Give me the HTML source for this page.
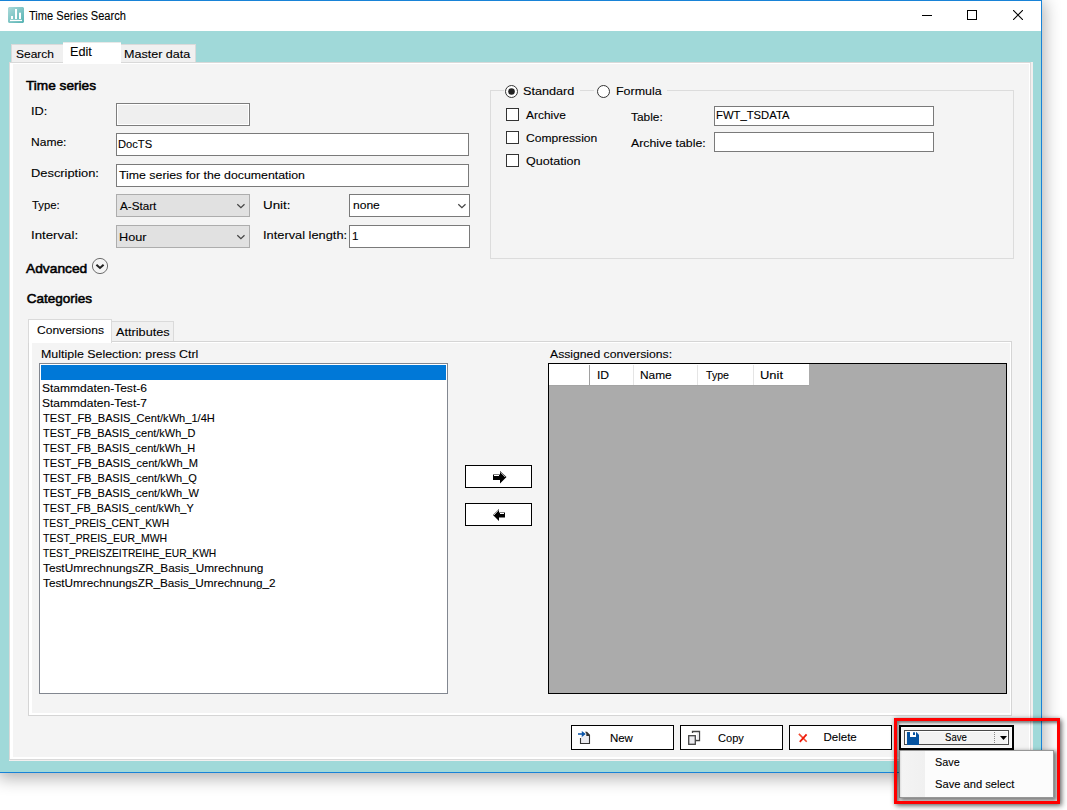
<!DOCTYPE html>
<html><head><meta charset="utf-8">
<style>
*{box-sizing:border-box;margin:0;padding:0}
html,body{width:1067px;height:810px;overflow:hidden;background:#fff;font-family:"Liberation Sans",sans-serif;font-size:12px;color:#000}
.a{position:absolute}
.t{position:absolute;white-space:nowrap;line-height:14px;transform-origin:0 0;z-index:8;-webkit-text-stroke:0.1px #000}
#win{position:absolute;left:0;top:0;width:1042px;height:773px;background:#a0d9d9;box-shadow:0 3px 16px 2px rgba(0,0,0,.32)}
.inp{position:absolute;background:#fff;border:1px solid #7a7a7a}
.combo{position:absolute;background:#e1e1e1;border:1px solid #adadad}
.cb{position:absolute;width:13px;height:13px;border:1px solid #333;background:#fff}
.btn{position:absolute;background:#fff;border:1px solid #000}
</style></head><body>
<div id="win">
 <div class="a" style="left:0;top:0;width:1042px;height:1px;background:#1883d7;z-index:5"></div>
 <div class="a" style="left:1041px;top:0;width:1px;height:773px;background:#1883d7;z-index:5"></div>
 <div class="a" style="left:0;top:772px;width:1042px;height:1px;background:#1883d7;z-index:5"></div>
 <div class="a" style="left:0;top:0;width:1041px;height:31px;background:#fff"></div>
 <svg class="a" style="left:8px;top:7px" width="16" height="16" viewBox="0 0 16 16">
  <defs><linearGradient id="g1" x1="0" y1="0" x2="1" y2="1"><stop offset="0" stop-color="#acdada"/><stop offset="1" stop-color="#55b2b2"/></linearGradient></defs>
  <path d="M1 0H15L16 1V15L15 16H1L0 15V1Z" fill="url(#g1)"/>
  <rect x="2" y="12.8" width="12" height="1.3" fill="#fff"/>
  <rect x="3" y="9" width="2" height="3" fill="#fff"/>
  <rect x="7" y="2" width="2" height="10" fill="#fff"/>
  <rect x="11" y="5.7" width="2" height="6.3" fill="#fff"/>
 </svg>
 <div class="a" style="left:922px;top:15px;width:10px;height:1px;background:#000"></div>
 <div class="a" style="left:967px;top:10px;width:10px;height:10px;border:1px solid #000"></div>
 <svg class="a" style="left:1013px;top:10px" width="10" height="10" viewBox="0 0 10 10"><path d="M0 0L10 10M10 0L0 10" stroke="#000" stroke-width="1.1"/></svg>

 <!-- outer tabs -->
 <div class="a" style="left:11px;top:44px;width:53px;height:19px;background:#f0f0f0;border:1px solid #dadada;border-bottom:none"></div>
 <div class="a" style="left:120px;top:44px;width:76px;height:19px;background:#f0f0f0;border:1px solid #dadada;border-bottom:none"></div>
 <div class="a" style="left:9px;top:62px;width:1024px;height:699px;background:#f2efef"></div>
 <div class="a" style="left:9px;top:62px;width:1022px;height:698px;background:#fff;border:1px solid #d9d9d9"></div>
 <div class="a" style="left:13px;top:64px;width:1016px;height:693px;background:#f4f4f4"></div>
 <div class="a" style="left:63px;top:42px;width:58px;height:22px;background:#fff;border-top:1px solid #e8e8e8"></div>

 <!-- Time series form -->
 <div class="inp" style="left:116px;top:103px;width:134px;height:23px;background:#efefef;border-color:#7d7d7d;box-shadow:inset 0 0 0 1px #fff"></div>
 <div class="inp" style="left:116px;top:133px;width:353px;height:23px"></div>
 <div class="inp" style="left:116px;top:164px;width:353px;height:23px"></div>
 <div class="combo" style="left:116px;top:194px;width:134px;height:23px"></div>
 <svg class="a" style="left:236px;top:203px" width="10" height="6" viewBox="0 0 10 6"><path d="M1.3 1.2L4.9 4.6L8.5 1.2" fill="none" stroke="#444" stroke-width="1.25"/></svg>
 <div class="inp" style="left:349px;top:194px;width:121px;height:23px"></div>
 <svg class="a" style="left:457px;top:203px" width="10" height="6" viewBox="0 0 10 6"><path d="M1.3 1.2L4.9 4.6L8.5 1.2" fill="none" stroke="#444" stroke-width="1.25"/></svg>
 <div class="combo" style="left:116px;top:225px;width:134px;height:23px"></div>
 <svg class="a" style="left:236px;top:234px" width="10" height="6" viewBox="0 0 10 6"><path d="M1.3 1.2L4.9 4.6L8.5 1.2" fill="none" stroke="#444" stroke-width="1.25"/></svg>
 <div class="inp" style="left:349px;top:225px;width:121px;height:23px"></div>
 <svg class="a" style="left:91px;top:257px" width="18" height="18" viewBox="0 0 18 18"><circle cx="9" cy="9" r="7.6" fill="none" stroke="#6e6e6e" stroke-width="1"/><path d="M5.4 7.7L9 11L12.6 7.7" fill="none" stroke="#222" stroke-width="2"/></svg>

 <!-- group box right -->
 <div class="a" style="left:490px;top:90px;width:524px;height:169px;border:1px solid #dcdcdc"></div>
 <div class="a" style="left:504px;top:84px;width:76px;height:14px;background:#f4f4f4"></div>
 <div class="a" style="left:594px;top:84px;width:73px;height:14px;background:#f4f4f4"></div>
 <svg class="a" style="left:505px;top:85px" width="13" height="13" viewBox="0 0 13 13"><circle cx="6.5" cy="6.5" r="6" fill="#fff" stroke="#333" stroke-width="1"/><circle cx="6.5" cy="6.5" r="3.3" fill="#222"/></svg>
 <svg class="a" style="left:597px;top:85px" width="13" height="13" viewBox="0 0 13 13"><circle cx="6.5" cy="6.5" r="6" fill="#fff" stroke="#333" stroke-width="1"/></svg>
 <div class="cb" style="left:506px;top:108px"></div>
 <div class="cb" style="left:506px;top:131px"></div>
 <div class="cb" style="left:506px;top:154px"></div>
 <div class="inp" style="left:714px;top:106px;width:220px;height:20px"></div>
 <div class="inp" style="left:714px;top:132px;width:220px;height:20px"></div>

 <!-- Categories -->
 <div class="a" style="left:111px;top:321px;width:63px;height:21px;background:#f0f0f0;border:1px solid #dadada;border-bottom:none"></div>
 <div class="a" style="left:28px;top:341px;width:984px;height:375px;background:#fff;border:1px solid #d5d5d5"></div>
 <div class="a" style="left:32px;top:343px;width:978px;height:370px;background:#f4f4f4"></div>
 <div class="a" style="left:28px;top:319px;width:84px;height:24px;background:#fff;border:1px solid #dadada;border-bottom:none"></div>

 <div class="a" style="left:39px;top:363px;width:409px;height:331px;background:#fff;border:1px solid #828790"></div>
 <div class="a" style="left:41px;top:365px;width:405px;height:15px;background:#0078d7"></div>

 <div class="btn" style="left:465px;top:465px;width:67px;height:23px"></div>
 <div class="btn" style="left:465px;top:503px;width:67px;height:23px"></div>
 <svg class="a" style="left:493px;top:471px" width="14" height="13" viewBox="0 0 14 13"><path d="M0 3.5H7V0L13.5 6L7 12.5V9H0Z" fill="#000"/><path d="M1 4.5H6" stroke="#fff" stroke-width="1"/><path d="M7.6 1.3L12.2 6" stroke="#fff" stroke-width="0.8"/></svg>
 <svg class="a" style="left:493px;top:509px" width="12" height="12" viewBox="0 0 12 12"><path d="M12 3.5H6V0L0 6L6 12V8.5H12Z" fill="#000"/><path d="M7 4.5H11" stroke="#fff" stroke-width="1"/><path d="M5.4 1.3L1 6" stroke="#fff" stroke-width="0.8"/></svg>

 <div class="a" style="left:548px;top:363px;width:459px;height:331px;background:#ababab;border:1px solid #000"></div>
 <div class="a" style="left:549px;top:364px;width:260px;height:21px;background:#fff"></div>
 <div class="a" style="left:589px;top:365px;width:1px;height:20px;background:#a0a0a0"></div>
 <div class="a" style="left:633px;top:365px;width:1px;height:20px;background:#e5e5e5"></div>
 <div class="a" style="left:697px;top:365px;width:1px;height:20px;background:#e5e5e5"></div>
 <div class="a" style="left:753px;top:365px;width:1px;height:20px;background:#e5e5e5"></div>
 <div class="a" style="left:549px;top:385px;width:260px;height:1px;background:#a4a4a4"></div>

 <!-- bottom buttons -->
 <div class="btn" style="left:571px;top:725px;width:103px;height:25px"></div>
 <svg class="a" style="left:577px;top:730px" width="15" height="15" viewBox="0 0 15 15"><rect x="4" y="5.5" width="8" height="7.5" fill="#ececf0"/><path d="M3.5 8V13.5H12.5V5" fill="none" stroke="#333" stroke-width="1.1"/><path d="M8 1.8H10L13 4.8V6H9.3V3.5Z" fill="#333"/><path d="M1 3.2H4.8V1L8.8 4L4.8 7V4.8H1Z" fill="#0a54a8"/></svg>
 <div class="btn" style="left:680px;top:725px;width:103px;height:25px"></div>
 <svg class="a" style="left:687px;top:730px" width="15" height="16" viewBox="0 0 15 16"><path d="M5.5 3V1.5H12.5V10.5H9" fill="none" stroke="#444" stroke-width="1.3"/><rect x="10" y="3" width="1.8" height="6.5" fill="#ececf0"/><rect x="1.7" y="5.7" width="6.6" height="8.6" fill="#ececf0" stroke="#444" stroke-width="1.3"/></svg>
 <div class="btn" style="left:789px;top:725px;width:103px;height:25px"></div>
 <svg class="a" style="left:798px;top:733px" width="10" height="10" viewBox="0 0 10 10"><path d="M0.9 0.9L8.7 8.7" stroke="#f04a30" stroke-width="1.6"/><path d="M8.6 1.3L1.8 8.8" stroke="#f01808" stroke-width="1.8"/></svg>

 <!-- save split button -->
 <div class="a" style="left:899px;top:725px;width:115px;height:25px;border:2px solid #000;background:#f5f5f5"></div>
 <div class="a" style="left:901px;top:727px;width:111px;height:21px;border:1px solid #fff;border-right-color:#fafafa"></div>
 <div class="a" style="left:904px;top:730px;width:105px;height:15px;border:1px solid #4a4a4a;background:#f3f3f3"></div>
 <div class="a" style="left:905px;top:731px;width:103px;height:13px;border-top:1px solid #fff;border-left:1px solid #fff;border-right:1px solid #fff"></div>
 <svg class="a" style="left:907px;top:732px" width="12" height="13" viewBox="0 0 12 13"><path d="M0 0H9.3L12 2.7V13H0Z" fill="#0452a0"/><rect x="3" y="0" width="6" height="5" fill="#fff"/><rect x="6" y="0.3" width="2" height="2.7" fill="#0452a0"/></svg>
 <svg class="a" style="left:994px;top:732px" width="1" height="12" viewBox="0 0 1 12"><rect x="0" y="0" width="1" height="1" fill="#888"/><rect x="0" y="2" width="1" height="1" fill="#888"/><rect x="0" y="4" width="1" height="1" fill="#888"/><rect x="0" y="6" width="1" height="1" fill="#888"/><rect x="0" y="8" width="1" height="1" fill="#888"/><rect x="0" y="10" width="1" height="1" fill="#888"/></svg>
 <svg class="a" style="left:1000px;top:736px" width="7" height="4" viewBox="0 0 7 4"><path d="M0 0H7L3.5 4Z" fill="#000"/></svg>

 <!-- dropdown menu -->
 <div class="a" style="left:899px;top:750px;width:155px;height:48px;background:#fcfcfc;border:1px solid #979797;box-shadow:2px 2px 4px 1px rgba(0,0,0,.5);z-index:7">
  <div class="a" style="left:0;top:0;width:25px;height:46px;background:linear-gradient(90deg,#f4f4f4,#f0f0f0)"></div>
 </div>

 <!-- red highlight -->
 <div class="a" style="left:894px;top:718px;width:166px;height:86px;border:3px solid #ff0000;box-shadow:2px 2px 5px rgba(0,0,0,.5), 0 0 4px rgba(0,0,0,.2), inset 2px 2px 3px rgba(0,0,0,.5);z-index:9"></div>
</div>
<div class="t" id="title" style="left:28.90px;top:9px;transform:scaleX(0.9238);">Time Series Search</div>
<div class="t" id="tSearch" style="left:15.50px;top:47px;font-size:11.5px;transform:scaleX(1.0432);">Search</div>
<div class="t" id="tEdit" style="left:69.90px;top:45px;transform:scaleX(1.0560);">Edit</div>
<div class="t" id="tMaster" style="left:124.10px;top:47px;font-size:11.5px;transform:scaleX(1.0918);">Master data</div>
<div class="t" id="hTS" style="left:25.90px;top:79px;font-size:13.5px;-webkit-text-stroke:0.55px #000;transform:scaleX(1.0099);">Time series</div>
<div class="t" id="lID" style="left:31.10px;top:104px;font-size:11.5px;transform:scaleX(1.1096);">ID:</div>
<div class="t" id="lName" style="left:31.10px;top:135px;font-size:11.5px;transform:scaleX(1.0472);">Name:</div>
<div class="t" id="lDesc" style="left:31.10px;top:166px;font-size:11.5px;transform:scaleX(1.1188);">Description:</div>
<div class="t" id="lType" style="left:31.90px;top:198px;font-size:11.5px;transform:scaleX(0.9816);">Type:</div>
<div class="t" id="lInt" style="left:31.30px;top:228px;font-size:11.5px;transform:scaleX(1.1509);">Interval:</div>
<div class="t" id="vDoc" style="left:117.90px;top:137px;font-size:11.5px;transform:scaleX(0.9711);">DocTS</div>
<div class="t" id="vDesc" style="left:118.90px;top:168px;font-size:11.5px;transform:scaleX(1.0723);">Time series for the documentation</div>
<div class="t" id="vAS" style="left:120.30px;top:199px;font-size:11.5px;transform:scaleX(1.0142);">A-Start</div>
<div class="t" id="vHour" style="left:119.30px;top:230px;font-size:11.5px;transform:scaleX(1.1048);">Hour</div>
<div class="t" id="lUnit" style="left:262.70px;top:198px;font-size:11.5px;transform:scaleX(1.1643);">Unit:</div>
<div class="t" id="lIL" style="left:262.70px;top:228px;font-size:11.5px;transform:scaleX(1.1149);">Interval length:</div>
<div class="t" id="vNone" style="left:352.90px;top:198px;font-size:11.5px;transform:scaleX(1.0487);">none</div>
<div class="t" id="v1" style="left:351.90px;top:229px;font-size:11.5px;">1</div>
<div class="t" id="hAdv" style="left:26.30px;top:262px;font-size:13.5px;-webkit-text-stroke:0.55px #000;transform:scaleX(1.0197);">Advanced</div>
<div class="t" id="rStd" style="left:523.10px;top:84px;font-size:11.5px;transform:scaleX(1.1002);">Standard</div>
<div class="t" id="rFor" style="left:615.50px;top:84px;font-size:11.5px;transform:scaleX(1.0854);">Formula</div>
<div class="t" id="cArc" style="left:525.70px;top:108px;font-size:11.5px;transform:scaleX(1.0399);">Archive</div>
<div class="t" id="cCom" style="left:525.70px;top:131px;font-size:11.5px;transform:scaleX(1.0523);">Compression</div>
<div class="t" id="cQuo" style="left:525.70px;top:154px;font-size:11.5px;transform:scaleX(1.0920);">Quotation</div>
<div class="t" id="lTab" style="left:630.90px;top:110px;font-size:11.5px;transform:scaleX(1.0333);">Table:</div>
<div class="t" id="lATab" style="left:630.70px;top:136px;font-size:11.5px;transform:scaleX(1.0725);">Archive table:</div>
<div class="t" id="vFWT" style="left:715.90px;top:108px;font-size:11.5px;transform:scaleX(0.9797);">FWT_TSDATA</div>
<div class="t" id="hCat" style="left:26.70px;top:292px;font-size:13.5px;-webkit-text-stroke:0.55px #000;">Categories</div>
<div class="t" id="tConv" style="left:36.70px;top:323px;font-size:11.5px;transform:scaleX(1.0479);">Conversions</div>
<div class="t" id="tAttr" style="left:116.10px;top:325px;font-size:11.5px;transform:scaleX(1.1042);">Attributes</div>
<div class="t" id="lMul" style="left:40.90px;top:347px;font-size:11.5px;transform:scaleX(1.0799);">Multiple Selection: press Ctrl</div>
<div class="t" id="i1" style="left:42.30px;top:381px;font-size:11.5px;transform:scaleX(1.0455);">Stammdaten-Test-6</div>
<div class="t" id="i2" style="left:42.30px;top:396px;font-size:11.5px;transform:scaleX(1.0455);">Stammdaten-Test-7</div>
<div class="t" id="i3" style="left:43.30px;top:411px;font-size:11.5px;transform:scaleX(0.9635);">TEST_FB_BASIS_Cent/kWh_1/4H</div>
<div class="t" id="i4" style="left:43.30px;top:426px;font-size:11.5px;transform:scaleX(0.9532);">TEST_FB_BASIS_cent/kWh_D</div>
<div class="t" id="i5" style="left:43.30px;top:441px;font-size:11.5px;transform:scaleX(0.9528);">TEST_FB_BASIS_cent/kWh_H</div>
<div class="t" id="i6" style="left:43.30px;top:456px;font-size:11.5px;transform:scaleX(0.9625);">TEST_FB_BASIS_cent/kWh_M</div>
<div class="t" id="i7" style="left:43.30px;top:471px;font-size:11.5px;transform:scaleX(0.9594);">TEST_FB_BASIS_cent/kWh_Q</div>
<div class="t" id="i8" style="left:43.30px;top:486px;font-size:11.5px;transform:scaleX(0.9599);">TEST_FB_BASIS_cent/kWh_W</div>
<div class="t" id="i9" style="left:43.30px;top:501px;font-size:11.5px;transform:scaleX(0.9466);">TEST_FB_BASIS_cent/kWh_Y</div>
<div class="t" id="i10" style="left:43.30px;top:516px;font-size:11.5px;transform:scaleX(0.8937);">TEST_PREIS_CENT_KWH</div>
<div class="t" id="i11" style="left:43.30px;top:531px;font-size:11.5px;transform:scaleX(0.9118);">TEST_PREIS_EUR_MWH</div>
<div class="t" id="i12" style="left:43.30px;top:546px;font-size:11.5px;transform:scaleX(0.8918);">TEST_PREISZEITREIHE_EUR_KWH</div>
<div class="t" id="i13" style="left:43.30px;top:561px;font-size:11.5px;transform:scaleX(1.0257);">TestUmrechnungsZR_Basis_Umrechnung</div>
<div class="t" id="i14" style="left:43.30px;top:576px;font-size:11.5px;transform:scaleX(1.0220);">TestUmrechnungsZR_Basis_Umrechnung_2</div>
<div class="t" id="lAss" style="left:549.50px;top:347px;font-size:11.5px;transform:scaleX(1.0609);">Assigned conversions:</div>
<div class="t" id="gID" style="left:596.90px;top:368px;font-size:11.5px;transform:scaleX(1.0548);">ID</div>
<div class="t" id="gName" style="left:640.30px;top:368px;font-size:11.5px;transform:scaleX(1.0340);">Name</div>
<div class="t" id="gType" style="left:705.50px;top:368px;font-size:11.5px;transform:scaleX(0.9207);">Type</div>
<div class="t" id="gUnit" style="left:759.90px;top:368px;font-size:11.5px;transform:scaleX(1.1261);">Unit</div>
<div class="t" id="bNew" style="left:609.90px;top:731px;font-size:11.5px;">New</div>
<div class="t" id="bCopy" style="left:717.70px;top:731px;font-size:11.5px;transform:scaleX(0.9638);">Copy</div>
<div class="t" id="bDel" style="left:823.50px;top:730px;font-size:11.5px;">Delete</div>
<div class="t" id="bSave" style="left:944.50px;top:730px;font-size:11.5px;transform:scaleX(0.8342);">Save</div>
<div class="t" id="mSave" style="left:935.30px;top:755px;font-size:11.5px;transform:scaleX(0.9410);">Save</div>
<div class="t" id="mSaveSel" style="left:935.30px;top:777px;font-size:11.5px;transform:scaleX(0.9694);">Save and select</div>
</body></html>
